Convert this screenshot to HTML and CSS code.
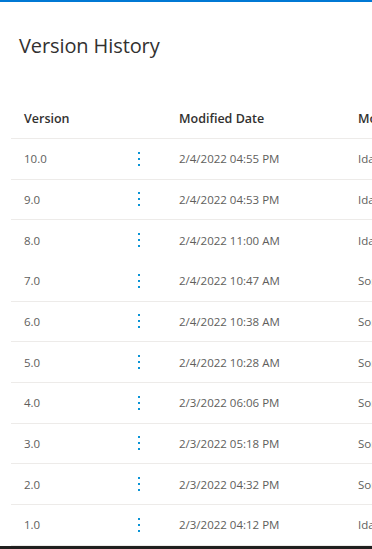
FILE: index.html
```html
<!DOCTYPE html>
<html lang="en">
<head>
    <meta charset="UTF-8">
    <meta name="viewport" content="width=device-width, initial-scale=1.0">
    <title>Version History</title>
    <link rel="stylesheet" href="styles.css">
</head>
<body>
    <div class="panel">
        <h1 class="title">Version History</h1>
        <div class="table">
            <div class="row head">
                <div class="cell">Version</div>
                <div class="cell"></div>
                <div class="cell">Modified Date</div>
                <div class="cell">Modified By</div>
            </div>
            <div class="row">
                <div class="cell">10.0</div>
                <div class="cell"><span class="more"><i></i><i></i><i></i></span></div>
                <div class="cell">2/4/2022 04:55 PM</div>
                <div class="cell">Idalia Lopez</div>
            </div>
            <div class="row">
                <div class="cell">9.0</div>
                <div class="cell"><span class="more"><i></i><i></i><i></i></span></div>
                <div class="cell">2/4/2022 04:53 PM</div>
                <div class="cell">Idalia Lopez</div>
            </div>
            <div class="row no-line">
                <div class="cell">8.0</div>
                <div class="cell"><span class="more"><i></i><i></i><i></i></span></div>
                <div class="cell">2/4/2022 11:00 AM</div>
                <div class="cell">Idalia Lopez</div>
            </div>
            <div class="row">
                <div class="cell">7.0</div>
                <div class="cell"><span class="more"><i></i><i></i><i></i></span></div>
                <div class="cell">2/4/2022 10:47 AM</div>
                <div class="cell">Sonia Ruiz</div>
            </div>
            <div class="row">
                <div class="cell">6.0</div>
                <div class="cell"><span class="more"><i></i><i></i><i></i></span></div>
                <div class="cell">2/4/2022 10:38 AM</div>
                <div class="cell">Sonia Ruiz</div>
            </div>
            <div class="row">
                <div class="cell">5.0</div>
                <div class="cell"><span class="more"><i></i><i></i><i></i></span></div>
                <div class="cell">2/4/2022 10:28 AM</div>
                <div class="cell">Sonia Ruiz</div>
            </div>
            <div class="row">
                <div class="cell">4.0</div>
                <div class="cell"><span class="more"><i></i><i></i><i></i></span></div>
                <div class="cell">2/3/2022 06:06 PM</div>
                <div class="cell">Sonia Ruiz</div>
            </div>
            <div class="row">
                <div class="cell">3.0</div>
                <div class="cell"><span class="more"><i></i><i></i><i></i></span></div>
                <div class="cell">2/3/2022 05:18 PM</div>
                <div class="cell">Sonia Ruiz</div>
            </div>
            <div class="row">
                <div class="cell">2.0</div>
                <div class="cell"><span class="more"><i></i><i></i><i></i></span></div>
                <div class="cell">2/3/2022 04:32 PM</div>
                <div class="cell">Sonia Ruiz</div>
            </div>
            <div class="row">
                <div class="cell">1.0</div>
                <div class="cell"><span class="more"><i></i><i></i><i></i></span></div>
                <div class="cell">2/3/2022 04:12 PM</div>
                <div class="cell">Idalia Lopez</div>
            </div>
        </div>
    </div>
    <div class="taskbar"></div>
</body>
</html>
```

FILE: styles.css
```css
html, body {
    margin: 0;
    height: 100%;
    overflow: hidden;
}

body {
    font-family: "Open Sans", "Noto Sans", sans-serif;
    background-color: #fff;
    color: #323130;
    display: flex;
    flex-direction: column;
}

.panel {
    flex: 1;
    border-top: 2px solid #0078d4;
    overflow: hidden;
}

.title {
    margin: 0;
    padding: 30px 0 0 19px;
    height: 65px;
    font-size: 20px;
    font-weight: 400;
    line-height: 27px;
    color: #323130;
    letter-spacing: -0.1px;
}

.table {
    margin-left: 11px;
    width: 600px;
}

.row {
    display: grid;
    grid-template-columns: 114px 41px 179px 1fr;
    height: 40.67px;
    box-sizing: border-box;
    align-items: center;
    border-bottom: 1px solid #edebe9;
    font-size: 11.5px;
    color: #605e5c;
}

.row.no-line {
    border-bottom-color: transparent;
}

.row.head {
    height: 42px;
    font-size: 12.5px;
    font-weight: 600;
    color: #323130;
    padding-top: 1px;
}

.cell {
    padding-left: 13px;
    white-space: nowrap;
}

.more {
    display: flex;
    flex-direction: column;
    gap: 4px;
    width: 2px;
}

.more i {
    display: block;
    width: 2px;
    height: 2px;
    background-color: #0a94d6;
}

.taskbar {
    height: 3px;
    background-color: #201f1e;
}
```
